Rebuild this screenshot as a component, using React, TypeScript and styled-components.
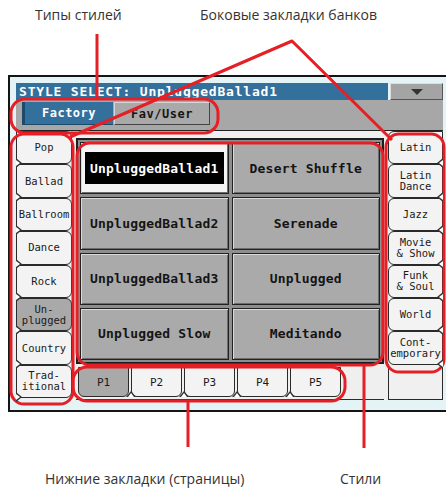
import styled, { createGlobalStyle, css } from 'styled-components';

const GlobalStyle = createGlobalStyle`
  html, body {
    margin: 0;
    padding: 0;
    background: #fff;
    overflow: hidden;
  }
  * { box-sizing: border-box; }
`;

const MONO = `'DejaVu Sans Mono', 'Liberation Mono', monospace`;

const Page = styled.div`
  position: relative;
  width: 446px;
  height: 488px;
  font-family: 'Open Sans', 'Noto Sans', sans-serif;
`;

const Captions = styled.div<{ $cols: string; $left: number }>`
  display: grid;
  grid-template-columns: ${({ $cols }) => $cols};
  padding-left: ${({ $left }) => $left}px;
  font-size: 14px;
  line-height: 18px;
  color: #333;
`;

const TopCaptions = styled(Captions)`
  height: 75px;
  padding-top: 6px;
`;

const BottomCaptions = styled(Captions)`
  margin-top: 58px;
`;

const Frame = styled.div`
  margin-left: 8px;
  width: 440px;
  border: 2px solid #151515;
  background: #e4f3f6;
  padding: 6px 3px 10px 6px;
`;

const Header = styled.div`
  display: flex;
  gap: 2px;
  height: 17px;
`;

const TitleBar = styled.div`
  flex: 1;
  background: #33709b;
  color: #fff;
  font-family: ${MONO};
  font-weight: bold;
  font-size: 13px;
  letter-spacing: 0.8px;
  line-height: 17px;
  padding-left: 3px;
  white-space: nowrap;
  overflow: hidden;
`;

const DropButton = styled.div`
  width: 53px;
  background: #a4a4a4;
  border: 1px solid;
  border-color: #dedede #555 #555 #dedede;
  display: flex;
  align-items: center;
  justify-content: center;

  &::after {
    content: '';
    border-left: 6px solid transparent;
    border-right: 6px solid transparent;
    border-top: 6px solid #333;
  }
`;

const Strip = styled.div`
  height: 31px;
  background: #a7a7a7;
  border-bottom: 1px solid #222;
  display: flex;
  align-items: flex-start;
  gap: 1px;
  padding: 2px 0 0 6px;
`;

const StripTab = styled.div<{ $active?: boolean; $w: number }>`
  width: ${({ $w }) => $w}px;
  height: 23px;
  display: flex;
  align-items: center;
  justify-content: center;
  font-family: ${MONO};
  font-weight: bold;
  font-size: 12px;
  letter-spacing: 0.5px;
  ${({ $active }) =>
    $active
      ? css`
          background: #33709b;
          color: #fff;
          border-left: 3px solid #1c4a6d;
          border-bottom: 1px solid #1c4a6d;
        `
      : css`
          background: #a9a9a9;
          color: #151515;
          border: 1px solid;
          border-color: #d6d6d6 #444 #444 #d6d6d6;
        `}
`;

const Main = styled.div`
  display: grid;
  grid-template-columns: 56px 1fr 55px;
  height: 269px;
  background: #efefef;
`;

const SideColumn = styled.div`
  display: flex;
  flex-direction: column;
`;

const notch = (side: 'left' | 'right' | 'bottom') => css`
  &::before,
  &::after {
    content: '';
    position: absolute;
    z-index: 2;
  }
  ${side === 'left' &&
  css`
    &::before {
      left: -1px;
      bottom: -5px;
      border-top: 5px solid transparent;
      border-bottom: 5px solid transparent;
      border-left: 6px solid #333;
    }
    &::after {
      left: -1px;
      bottom: -3px;
      border-top: 3px solid transparent;
      border-bottom: 3px solid transparent;
      border-left: 4px solid #fff;
    }
  `}
  ${side === 'right' &&
  css`
    &::before {
      right: -1px;
      bottom: -5px;
      border-top: 5px solid transparent;
      border-bottom: 5px solid transparent;
      border-right: 6px solid #333;
    }
    &::after {
      right: -1px;
      bottom: -3px;
      border-top: 3px solid transparent;
      border-bottom: 3px solid transparent;
      border-right: 4px solid #fff;
    }
  `}
  ${side === 'bottom' &&
  css`
    &::before {
      left: -6px;
      bottom: -1px;
      border-left: 5px solid transparent;
      border-right: 5px solid transparent;
      border-bottom: 6px solid #333;
    }
    &::after {
      left: -4px;
      bottom: -1px;
      border-left: 3px solid transparent;
      border-right: 3px solid transparent;
      border-bottom: 4px solid #fff;
    }
  `}
`;

const SideTab = styled.div<{ $side: 'left' | 'right'; $active?: boolean }>`
  position: relative;
  height: 33.4px;
  flex-shrink: 0;
  border: 1px solid #2a2a2a;
  border-radius: ${({ $side }) => ($side === 'left' ? '0 6px 6px 0' : '6px 0 0 6px')};
  background: ${({ $active }) => ($active ? '#a9a9a9' : '#f3f3f3')};
  display: flex;
  align-items: center;
  justify-content: center;
  text-align: center;
  font-family: ${MONO};
  font-size: 10.5px;
  line-height: 11px;
  color: #1a1a1a;
  white-space: pre;
  ${({ $side }) => notch($side)}
`;

const SideFiller = styled.div`
  flex: 1;
  border: 1px solid #2a2a2a;
  border-top: none;
  background: #f0f0f0;
`;

const Center = styled.div`
  display: flex;
  flex-direction: column;
  padding: 7px 4px 0;
`;

const Panel = styled.div`
  height: 226px;
  display: grid;
  grid-template-columns: 1fr 1fr;
  grid-template-rows: repeat(4, 1fr);
  gap: 3px;
  padding: 2px;
  border: 2px solid #1e1e1e;
  background: #8e8e8e;
`;

const Cell = styled.div<{ $selected?: boolean }>`
  display: flex;
  align-items: center;
  justify-content: center;
  padding: 0 4px;
  border: 1px solid #222;
  background: ${({ $selected }) => ($selected ? '#f4f4f4' : '#aaaaaa')};
  box-shadow: inset 1px 1px 0 #dadada, inset -1px -1px 0 #6c6c6c;
  font-family: ${MONO};
  font-weight: bold;
  font-size: 13px;
  letter-spacing: 0.2px;
  color: #141414;
  white-space: nowrap;
`;

const SelectedLabel = styled.div`
  width: 100%;
  height: 32px;
  background: #000;
  color: #fff;
  display: flex;
  align-items: center;
  justify-content: center;
`;

const PageRow = styled.div`
  flex: 1;
  display: flex;
  gap: 2px;
  padding: 3px 0 2px 2px;
  border-bottom: 1px solid #2a2a2a;
`;

const PageTab = styled.div<{ $active?: boolean; $first?: boolean }>`
  position: relative;
  width: 51px;
  border: 1px solid #2a2a2a;
  border-radius: 0 0 6px 6px;
  background: ${({ $active }) => ($active ? '#a9a9a9' : '#f3f3f3')};
  display: flex;
  align-items: center;
  justify-content: center;
  font-family: ${MONO};
  font-size: 11px;
  color: #1a1a1a;
  ${({ $first }) => !$first && notch('bottom')}
`;

const Overlay = styled.svg`
  position: absolute;
  top: 0;
  left: 0;
  pointer-events: none;
`;

const leftTabs = ['Pop', 'Ballad', 'Ballroom', 'Dance', 'Rock', 'Un-\nplugged', 'Country', 'Trad-\nitional'];
const rightTabs = ['Latin', 'Latin\nDance', 'Jazz', 'Movie\n& Show', 'Funk\n& Soul', 'World', 'Cont-\nemporary'];
const styles = [
  'UnpluggedBallad1',
  'Desert Shuffle',
  'UnpluggedBallad2',
  'Serenade',
  'UnpluggedBallad3',
  'Unplugged',
  'Unplugged Slow',
  'Meditando',
];
const pages = ['P1', 'P2', 'P3', 'P4', 'P5'];

export default function App() {
  return (
    <Page>
      <GlobalStyle />
      <TopCaptions $cols="165px auto" $left={35}>
        <span>Типы стилей</span>
        <span>Боковые закладки банков</span>
      </TopCaptions>

      <Frame>
        <Header>
          <TitleBar>STYLE SELECT: UnpluggedBallad1</TitleBar>
          <DropButton />
        </Header>
        <Strip>
          <StripTab $active $w={91}>Factory</StripTab>
          <StripTab $w={96}>Fav/User</StripTab>
        </Strip>
        <Main>
          <SideColumn>
            {leftTabs.map((t) => (
              <SideTab key={t} $side="left" $active={t.startsWith('Un')}>
                {t}
              </SideTab>
            ))}
          </SideColumn>
          <Center>
            <Panel>
              {styles.map((s, i) => (
                <Cell key={s} $selected={i === 0}>
                  {i === 0 ? <SelectedLabel>{s}</SelectedLabel> : s}
                </Cell>
              ))}
            </Panel>
            <PageRow>
              {pages.map((p, i) => (
                <PageTab key={p} $active={i === 0} $first={i === 0}>
                  {p}
                </PageTab>
              ))}
            </PageRow>
          </Center>
          <SideColumn>
            {rightTabs.map((t) => (
              <SideTab key={t} $side="right">
                {t}
              </SideTab>
            ))}
            <SideFiller />
          </SideColumn>
        </Main>
      </Frame>

      <BottomCaptions $cols="295px auto" $left={45}>
        <span>Нижние закладки (страницы)</span>
        <span>Стили</span>
      </BottomCaptions>

      <Overlay width="446" height="488" viewBox="0 0 446 488">
        <g fill="none" stroke="#e41f26" strokeWidth="3" strokeLinejoin="round">
          <line x1="97" y1="34" x2="97" y2="99" />
          <rect x="11" y="99" width="207" height="34" rx="14" />
          <polyline points="70,137 292,41 392,140" />
          <rect x="11" y="134" width="62" height="270" rx="13" />
          <rect x="77" y="143" width="306" height="222" rx="13" />
          <rect x="73" y="367" width="272" height="34" rx="14" />
          <rect x="386" y="134" width="58" height="238" rx="13" />
          <line x1="188" y1="401" x2="188" y2="447" />
          <line x1="364" y1="365" x2="364" y2="448" />
        </g>
      </Overlay>
    </Page>
  );
}
